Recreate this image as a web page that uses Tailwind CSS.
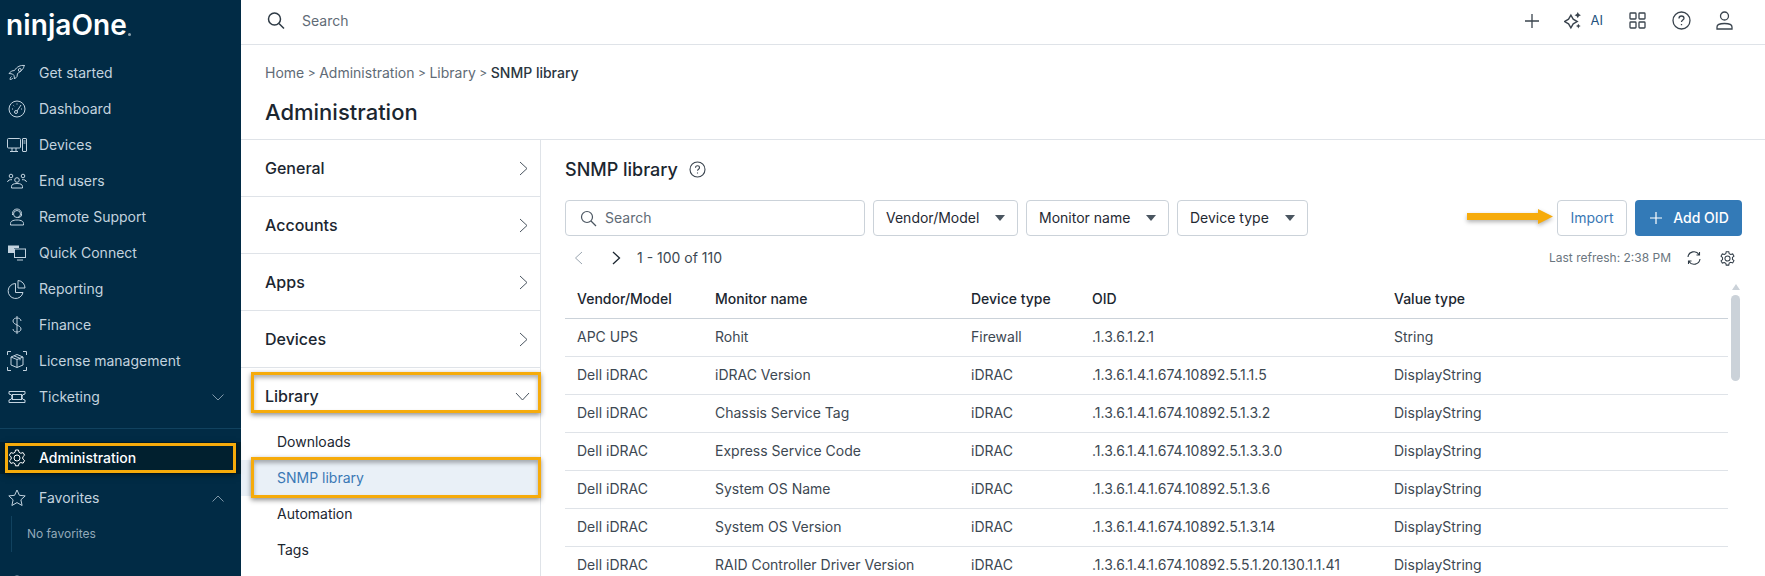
<!DOCTYPE html>
<html lang="en">
<head>
    <meta charset="UTF-8">
    <title>NinjaOne - SNMP library</title>
    <script src="https://cdn.jsdelivr.net/npm/@tailwindcss/browser@4"></script>
</head>
<body class="font-['Inter',sans-serif] text-[#1f2933] bg-white overflow-hidden">
<div class="relative flex h-[576px] w-[1765px] overflow-hidden">

    <!-- Sidebar -->
    <aside class="w-[241px] shrink-0 bg-[#012b45] text-[#c3d3df] text-sm overflow-hidden">
        <div class="h-[55px] pl-[6px] pt-[7px] flex items-start">
            <span class="text-white text-[28px] leading-[36px] font-semibold tracking-[0.1px]">ninjaOne</span>
            <span class="w-[3px] h-[3px] rounded-full bg-[#8fa3b0] mt-[26px] ml-[1px]"></span>
        </div>
        <nav class="flex flex-col">
            <a class="h-9 flex items-center gap-[12px] pl-[7px]">
                <svg class="w-[20px] h-[20px] shrink-0" viewBox="0 0 20 20" fill="none" stroke="currentColor" stroke-width="1"><path d="M17.5 2.500c-4-.5-7.500 1-10 5l-3 .5-2.500 2.500 3.500.5 1.500 1.500.5 3.500 2.500-2.500.5-3c4-2.500 7-5.500 6.500-8.500z"/><circle cx="12.800" cy="7" r="1.500"/><path d="M4.500 13.500c-1 .5-1.500 2-1.500 3 1 0 2.500-.5 3-1.500"/></svg>
                <span>Get started</span>
            </a>
            <a class="h-9 flex items-center gap-[12px] pl-[7px]">
                <svg class="w-[20px] h-[20px] shrink-0" viewBox="0 0 20 20" fill="none" stroke="currentColor" stroke-width="1"><circle cx="10" cy="10" r="8"/><circle cx="9" cy="13" r="1.500"/><path d="M10 12l4-6M5 10h1M6.500 6.500l.7.7M10 4.500v1M15 10h-1"/></svg>
                <span>Dashboard</span>
            </a>
            <a class="h-9 flex items-center gap-[12px] pl-[7px]">
                <svg class="w-[20px] h-[20px] shrink-0" viewBox="0 0 20 20" fill="none" stroke="currentColor" stroke-width="1"><rect x="0.500" y="3.500" width="13" height="9.500" rx="1"/><path d="M5 13v3M9 13v3M3 16.500h8"/><rect x="15.500" y="3.500" width="4" height="13" rx=".5"/><path d="M16.500 6h2M16.500 8h2"/></svg>
                <span>Devices</span>
            </a>
            <a class="h-9 flex items-center gap-[12px] pl-[7px]">
                <svg class="w-[20px] h-[20px] shrink-0" viewBox="0 0 20 20" fill="none" stroke="currentColor" stroke-width="1"><circle cx="10" cy="9" r="2.300"/><circle cx="4" cy="5" r="1.800"/><circle cx="16" cy="5" r="1.800"/><path d="M4.500 17v-1.500c0-2 2-3 5.500-3s5.500 1 5.500 3V17zM.5 11c.5-1.800 2-2.500 4.500-2.300M19.500 11c-.5-1.800-2-2.500-4.500-2.300"/></svg>
                <span>End users</span>
            </a>
            <a class="h-9 flex items-center gap-[12px] pl-[7px]">
                <svg class="w-[20px] h-[20px] shrink-0" viewBox="0 0 20 20" fill="none" stroke="currentColor" stroke-width="1"><circle cx="10" cy="7" r="3.500"/><path d="M5.500 8V6.500a4.500 4.500 0 0 1 9 0V8M14.500 8c0 1.500-1.500 2.500-3.500 2.500"/><path d="M3.500 18v-1.500c0-2 2-3.500 6.500-3.500s6.500 1.500 6.500 3.500V18z"/></svg>
                <span>Remote Support</span>
            </a>
            <a class="h-9 flex items-center gap-[12px] pl-[7px]">
                <svg class="w-[20px] h-[20px] shrink-0" viewBox="0 0 20 20" fill="none" stroke="currentColor" stroke-width="1"><path d="M1 2.500h11v2.500H7v5H1z" fill="currentColor" stroke="none"/><rect x="7.500" y="6" width="11" height="8.500"/><path d="M10 17h6"/></svg>
                <span>Quick Connect</span>
            </a>
            <a class="h-9 flex items-center gap-[12px] pl-[7px]">
                <svg class="w-[20px] h-[20px] shrink-0" viewBox="0 0 20 20" fill="none" stroke="currentColor" stroke-width="1"><path d="M8.500 4.500a7.500 7.500 0 1 0 7.500 9H8.500z"/><path d="M11 1.500a7.500 7.500 0 0 1 7 7.500h-7z"/></svg>
                <span>Reporting</span>
            </a>
            <a class="h-9 flex items-center gap-[12px] pl-[7px]">
                <svg class="w-[20px] h-[20px] shrink-0" viewBox="0 0 20 20" fill="none" stroke="currentColor" stroke-width="1"><path d="M14 6c0-2-2-3-4-3S6 4 6 6s2 3 4 4 4 2 4 4-2 3-4 3-4-1-4-3M10 1v18"/></svg>
                <span>Finance</span>
            </a>
            <a class="h-9 flex items-center gap-[12px] pl-[7px]">
                <svg class="w-[20px] h-[20px] shrink-0" viewBox="0 0 20 20" fill="none" stroke="currentColor" stroke-width="1"><path d="M.5 4V.5H4M16 .5h3.500V4M19.500 16v3.500H16M4 19.500H.5V16"/><path d="M10 3.500l6 2.500v8l-6 2.500L4 14V6zM4 6l6 2.500L16 6M10 8.500v8M7 4.800l6 2.500v2"/></svg>
                <span>License management</span>
            </a>
            <a class="h-9 flex items-center gap-[12px] pl-[7px] pr-[17px]">
                <svg class="w-[20px] h-[20px] shrink-0" viewBox="0 0 20 20" fill="none" stroke="currentColor" stroke-width="1"><path d="M2 4.500h16v2.500a3 3 0 0 0 0 6v2.500H2V13a3 3 0 0 0 0-6z"/><rect x="5.500" y="7.500" width="9" height="5"/></svg>
                <span class="flex-1">Ticketing</span>
                <svg class="w-[12px] h-[7px] text-[#7f97a8]" viewBox="0 0 12 7" fill="none" stroke="currentColor"><path d="M.5.500l5.500 5.500L11.500.500"/></svg>
            </a>
        </nav>
        <div class="mt-[13px] border-t border-[#11425f]"></div>
        <a class="mt-[13px] h-[32px] flex items-center gap-[12px] pl-[7px] bg-[#01202f] text-white">
            <svg class="w-[20px] h-[20px] shrink-0" viewBox="0 0 20 20" fill="none" stroke="currentColor" stroke-width="1"><circle cx="10" cy="10" r="3"/><path d="M8.500 2h3l.5 2.300 1.800 1 2.300-.7 1.500 2.600-1.800 1.600v2.200l1.800 1.600-1.500 2.600-2.300-.7-1.800 1-.5 2.300h-3L8 15.700l-1.800-1-2.300.7-1.500-2.600 1.800-1.600V9L2.400 7.200l1.500-2.600 2.300.7 1.800-1z"/></svg>
            <span class="font-medium">Administration</span>
        </a>
        <a class="mt-[8px] h-[32px] flex items-center gap-[12px] pl-[7px] pr-[17px]">
            <svg class="w-[20px] h-[20px] shrink-0" viewBox="0 0 20 20" fill="none" stroke="currentColor" stroke-width="1"><path d="M10 2l2.400 5.300 5.800.6-4.300 3.900 1.200 5.700L10 14.600l-5.100 2.900 1.200-5.700L1.800 7.900l5.800-.6z"/></svg>
            <span class="flex-1">Favorites</span>
            <svg class="w-[12px] h-[7px] text-[#7f97a8]" viewBox="0 0 12 7" fill="none" stroke="currentColor"><path d="M.5 6.500L6 1l5.500 5.500"/></svg>
        </a>
        <div class="ml-[11px] mt-[2px] h-[36px] border-l border-[#11425f] pl-[15px] flex items-center text-xs text-[#92a9b9]">No favorites</div>
        <svg class="ml-[7px] mt-[22px] w-[20px] h-[20px]" viewBox="0 0 20 20" fill="none" stroke="currentColor" stroke-width="1"><circle cx="10" cy="10" r="8"/></svg>
    </aside>

    <!-- Main -->
    <div class="flex-1 flex flex-col min-w-0">
        <header class="h-[45px] shrink-0 border-b border-[#dfe3e8] flex items-center pl-[25px] pr-[32px] pb-[3px]">
            <svg class="w-[20px] h-[20px] text-[#2e3a45]" viewBox="0 0 20 20" fill="none" stroke="currentColor" stroke-width="1.500"><circle cx="8.500" cy="8" r="6"/><path d="M13 12.500l5 5"/></svg>
            <span class="ml-[16px] text-sm text-[#5f6b76] flex-1">Search</span>
            <svg class="w-[16px] h-[16px] text-[#3a444e]" viewBox="0 0 16 16" fill="none" stroke="currentColor" stroke-width="1.300"><path d="M8 1v14M1 8h14"/></svg>
            <svg class="ml-[24px] w-[18px] h-[18px] text-[#3a444e]" viewBox="0 0 17 17" fill="currentColor"><path d="M6.500 3l2.200 3.800L12.500 9l-3.800 2.200L6.500 15l-2.200-3.800L.5 9l3.800-2.200z" fill="none" stroke="currentColor" stroke-width="1.300"/><path d="M13 0l1 2 2 1-2 1-1 2-1-2-2-1 2-1zM13.500 11l.8 1.500 1.500.8-1.500.7-.8 1.500-.7-1.500-1.500-.7 1.500-.8z"/></svg>
            <span class="ml-[9px] text-[13px] text-[#23527c]">AI</span>
            <svg class="ml-[26px] w-[17px] h-[17px] text-[#3a444e]" viewBox="0 0 17 17" fill="none" stroke="currentColor" stroke-width="1.300"><rect x="1" y="1" width="6" height="6" rx=".8"/><rect x="10" y="1" width="6" height="6" rx=".8"/><rect x="1" y="10" width="6" height="6" rx=".8"/><rect x="10" y="10" width="6" height="6" rx=".8"/></svg>
            <svg class="ml-[26px] w-[19px] h-[19px] text-[#3a444e]" viewBox="0 0 19 19" fill="none" stroke="currentColor" stroke-width="1.300"><circle cx="9.500" cy="9.500" r="8.500"/><path d="M7 7.500c0-1.500 1-2.500 2.500-2.500s2.500 1 2.500 2.300c0 1.700-2.500 1.900-2.500 3.700M9.500 13v1.200"/></svg>
            <svg class="ml-[25px] w-[17px] h-[19px] text-[#3a444e]" viewBox="0 0 17 19" fill="none" stroke="currentColor" stroke-width="1.300"><circle cx="8.500" cy="5" r="4"/><path d="M1 18v-2c0-2 2.500-3.500 7.500-3.500S16 14 16 16v2z"/></svg>
        </header>

        <div class="h-[95px] shrink-0 border-b border-[#dfe3e8] pl-[24px]">
            <div class="mt-[18px] text-sm leading-[20px] text-[#5f6b76] flex items-center gap-[3.500px]">
                <span>Home</span><span class="text-xs">&gt;</span><span>Administration</span><span class="text-xs">&gt;</span><span>Library</span><span class="text-xs">&gt;</span><span class="text-[#2b3640] font-medium">SNMP library</span>
            </div>
            <h1 class="mt-[15px] text-[22px] leading-[28px] font-medium text-[#1b2630]">Administration</h1>
        </div>

        <div class="flex-1 flex min-h-0">
            <!-- Left panel -->
            <div class="w-[300px] shrink-0 border-r border-[#dfe3e8] text-[#1b2630]">
                <div class="h-[57px] border-b border-[#dfe3e8] flex items-center justify-between pl-[24px] pr-[12px] font-medium">
                    <span>General</span>
                    <svg class="w-[9px] h-[15px] text-[#4a5560]" viewBox="0 0 9 15" fill="none" stroke="currentColor"><path d="M1 1l7 6.500L1 14"/></svg>
                </div>
                <div class="h-[57px] border-b border-[#dfe3e8] flex items-center justify-between pl-[24px] pr-[12px] font-medium">
                    <span>Accounts</span>
                    <svg class="w-[9px] h-[15px] text-[#4a5560]" viewBox="0 0 9 15" fill="none" stroke="currentColor"><path d="M1 1l7 6.500L1 14"/></svg>
                </div>
                <div class="h-[57px] border-b border-[#dfe3e8] flex items-center justify-between pl-[24px] pr-[12px] font-medium">
                    <span>Apps</span>
                    <svg class="w-[9px] h-[15px] text-[#4a5560]" viewBox="0 0 9 15" fill="none" stroke="currentColor"><path d="M1 1l7 6.500L1 14"/></svg>
                </div>
                <div class="h-[57px] border-b border-[#dfe3e8] flex items-center justify-between pl-[24px] pr-[12px] font-medium">
                    <span>Devices</span>
                    <svg class="w-[9px] h-[15px] text-[#4a5560]" viewBox="0 0 9 15" fill="none" stroke="currentColor"><path d="M1 1l7 6.500L1 14"/></svg>
                </div>
                <div class="h-[56px] flex items-center justify-between pl-[24px] pr-[10px] font-medium">
                    <span>Library</span>
                    <svg class="w-[15px] h-[9px] text-[#4a5560]" viewBox="0 0 15 9" fill="none" stroke="currentColor"><path d="M1 1l6.500 7L14 1"/></svg>
                </div>
                <div class="text-sm">
                    <div class="h-9 flex items-center pl-[36px]">Downloads</div>
                    <div class="h-9 flex items-center pl-[36px] bg-[#e9f0f7] text-[#3a78b5]">SNMP library</div>
                    <div class="h-9 flex items-center pl-[36px]">Automation</div>
                    <div class="h-9 flex items-center pl-[36px]">Tags</div>
                </div>
            </div>

            <!-- Right panel -->
            <div class="flex-1 min-w-0 pl-[24px] pr-[23px]">
                <div class="h-[60px] flex items-center gap-[11px] pb-[1px]">
                    <h2 class="text-[18px] font-medium text-[#1b2630]">SNMP library</h2>
                    <svg class="w-[17px] h-[17px] text-[#3a444e]" viewBox="0 0 17 17" fill="none" stroke="currentColor" stroke-width="1.100"><circle cx="8.500" cy="8.500" r="7.500"/><path d="M6.500 6.800c0-1.200.8-2 2-2s2 .8 2 1.900c0 1.500-2 1.500-2 3.100M8.500 11.500v1"/></svg>
                </div>
                <div class="h-[36px] flex items-stretch text-sm">
                    <div class="w-[300px] border border-[#cbd2d9] rounded-[4px] flex items-center pl-[14px] text-[#5f6b76]">
                        <svg class="w-[17px] h-[17px] text-[#4a5560]" viewBox="0 0 17 17" fill="none" stroke="currentColor" stroke-width="1.200"><circle cx="7" cy="7" r="5.500"/><path d="M11 11l5 5"/></svg>
                        <span class="ml-[8px]">Search</span>
                    </div>
                    <div class="ml-[8px] w-[145px] border border-[#cbd2d9] rounded-[4px] flex items-center justify-between pl-[12px] pr-[12px]">
                        <span>Vendor/Model</span>
                        <span class="w-0 h-0 border-x-[5.500px] border-x-transparent border-t-[6px] border-t-[#4a5560]"></span>
                    </div>
                    <div class="ml-[8px] w-[143px] border border-[#cbd2d9] rounded-[4px] flex items-center justify-between pl-[12px] pr-[12px]">
                        <span>Monitor name</span>
                        <span class="w-0 h-0 border-x-[5.500px] border-x-transparent border-t-[6px] border-t-[#4a5560]"></span>
                    </div>
                    <div class="ml-[8px] w-[131px] border border-[#cbd2d9] rounded-[4px] flex items-center justify-between pl-[12px] pr-[12px]">
                        <span>Device type</span>
                        <span class="w-0 h-0 border-x-[5.500px] border-x-transparent border-t-[6px] border-t-[#4a5560]"></span>
                    </div>
                    <div class="ml-auto w-[70px] border border-[#cbd2d9] rounded-[4px] flex items-center justify-center text-[#3a78b5]">Import</div>
                    <div class="ml-[8px] w-[107px] bg-[#337ab7] rounded-[4px] flex items-center justify-center gap-[11px] pl-[2px] text-white font-medium">
                        <svg class="w-[12px] h-[12px]" viewBox="0 0 12 12" fill="none" stroke="currentColor" stroke-width="1.200"><path d="M6 0v12M0 6h12"/></svg>
                        <span>Add OID</span>
                    </div>
                </div>
                <div class="h-[44px] flex items-center text-sm">
                    <svg class="ml-[9px] w-[9px] h-[14px] text-[#9aa5b0]" viewBox="0 0 9 14" fill="none" stroke="currentColor"><path d="M8 1L1.500 7 8 13"/></svg>
                    <svg class="ml-[29px] w-[9px] h-[14px] text-[#1b2630]" viewBox="0 0 9 14" fill="none" stroke="currentColor" stroke-width="1.300"><path d="M1 1l6.500 6L1 13"/></svg>
                    <span class="ml-[16px] text-[#3d4852]">1 - 100 of 110</span>
                    <span class="ml-auto text-xs text-[#6b7680]">Last refresh: 2:38 PM</span>
                    <svg class="ml-[16px] w-[14px] h-[14px] text-[#2e3a45]" viewBox="0 0 14 14" fill="none" stroke="currentColor" stroke-width="1.100"><path d="M1 6a6 6 0 0 1 11-2.500M13 8a6 6 0 0 1-11 2.500M12.500 1v3h-3M1.500 13v-3h3"/></svg>
                    <svg class="ml-[18px] mr-[6px] w-[17px] h-[17px] text-[#2e3a45]" viewBox="0 0 20 20" fill="none" stroke="currentColor" stroke-width="1.200"><circle cx="10" cy="10" r="3"/><path d="M8.500 2h3l.5 2.300 1.800 1 2.300-.7 1.500 2.600-1.800 1.600v2.200l1.800 1.600-1.500 2.600-2.300-.7-1.800 1-.5 2.300h-3L8 15.700l-1.800-1-2.300.7-1.500-2.600 1.800-1.600V9L2.400 7.200l1.500-2.600 2.300.7 1.800-1z"/></svg>
                </div>
                <div class="flex">
                    <table class="w-[1163px] table-fixed text-sm shrink-0 border-collapse">
                        <colgroup>
                            <col class="w-[138px]"><col class="w-[256px]"><col class="w-[121px]"><col class="w-[302px]"><col>
                        </colgroup>
                        <thead>
                            <tr class="h-[38px] border-b border-[#cbd2d9] text-left text-[#1b2630]">
                                <th class="pl-[12px] font-medium">Vendor/Model</th><th class="pl-[12px] font-medium">Monitor name</th><th class="pl-[12px] font-medium">Device type</th><th class="pl-[12px] font-medium">OID</th><th class="pl-[12px] font-medium">Value type</th>
                            </tr>
                        </thead>
                        <tbody class="text-[#3d4852]">
                            <tr class="h-[38px] border-b border-[#dfe3e8]"><td class="pl-[12px]">APC UPS</td><td class="pl-[12px]">Rohit</td><td class="pl-[12px]">Firewall</td><td class="pl-[12px]">.1.3.6.1.2.1</td><td class="pl-[12px]">String</td></tr>
                            <tr class="h-[38px] border-b border-[#dfe3e8]"><td class="pl-[12px]">Dell iDRAC</td><td class="pl-[12px]">iDRAC Version</td><td class="pl-[12px]">iDRAC</td><td class="pl-[12px]">.1.3.6.1.4.1.674.10892.5.1.1.5</td><td class="pl-[12px]">DisplayString</td></tr>
                            <tr class="h-[38px] border-b border-[#dfe3e8]"><td class="pl-[12px]">Dell iDRAC</td><td class="pl-[12px]">Chassis Service Tag</td><td class="pl-[12px]">iDRAC</td><td class="pl-[12px]">.1.3.6.1.4.1.674.10892.5.1.3.2</td><td class="pl-[12px]">DisplayString</td></tr>
                            <tr class="h-[38px] border-b border-[#dfe3e8]"><td class="pl-[12px]">Dell iDRAC</td><td class="pl-[12px]">Express Service Code</td><td class="pl-[12px]">iDRAC</td><td class="pl-[12px]">.1.3.6.1.4.1.674.10892.5.1.3.3.0</td><td class="pl-[12px]">DisplayString</td></tr>
                            <tr class="h-[38px] border-b border-[#dfe3e8]"><td class="pl-[12px]">Dell iDRAC</td><td class="pl-[12px]">System OS Name</td><td class="pl-[12px]">iDRAC</td><td class="pl-[12px]">.1.3.6.1.4.1.674.10892.5.1.3.6</td><td class="pl-[12px]">DisplayString</td></tr>
                            <tr class="h-[38px] border-b border-[#dfe3e8]"><td class="pl-[12px]">Dell iDRAC</td><td class="pl-[12px]">System OS Version</td><td class="pl-[12px]">iDRAC</td><td class="pl-[12px]">.1.3.6.1.4.1.674.10892.5.1.3.14</td><td class="pl-[12px]">DisplayString</td></tr>
                            <tr class="h-[38px] border-b border-[#dfe3e8]"><td class="pl-[12px]">Dell iDRAC</td><td class="pl-[12px]">RAID Controller Driver Version</td><td class="pl-[12px]">iDRAC</td><td class="pl-[12px]">.1.3.6.1.4.1.674.10892.5.5.1.20.130.1.1.41</td><td class="pl-[12px]">DisplayString</td></tr>
                        </tbody>
                    </table>
                    <div class="ml-[3px] w-[9px] flex flex-col items-center">
                        <span class="mt-[4px] w-0 h-0 border-x-[4.500px] border-x-transparent border-b-[6px] border-b-[#cbd2d9]"></span>
                        <div class="mt-[5px] w-[9px] h-[86px] rounded-full bg-[#cbd2d9]"></div>
                    </div>
                </div>
            </div>
        </div>
    </div>

    <!-- Orange annotations laid over the screenshot -->
    <div class="absolute left-[5px] top-[443px] w-[231px] h-[30px] border-[3px] border-[#f6ab0b] shadow-[0_2px_6px_rgba(0,0,0,0.5)]"></div>
    <div class="absolute left-[251px] top-[372px] w-[290px] h-[41px] border-[3px] border-[#f6ab0b] shadow-[0_2px_5px_rgba(0,0,0,0.45),inset_0_3px_4px_rgba(0,0,0,0.3)]"></div>
    <div class="absolute left-[251px] top-[457px] w-[290px] h-[41px] border-[3px] border-[#f6ab0b] shadow-[0_2px_5px_rgba(0,0,0,0.45),inset_0_3px_4px_rgba(0,0,0,0.3)]"></div>
    <svg class="absolute left-[1464px] top-[207px] w-[92px] h-[22px] drop-shadow-[0_2px_2px_rgba(0,0,0,0.3)]" viewBox="0 0 92 22" fill="#f6ab0b"><path d="M3 6h71V2l15 7.500L74 17v-4H3z"/></svg>
</div>
</body>
</html>
